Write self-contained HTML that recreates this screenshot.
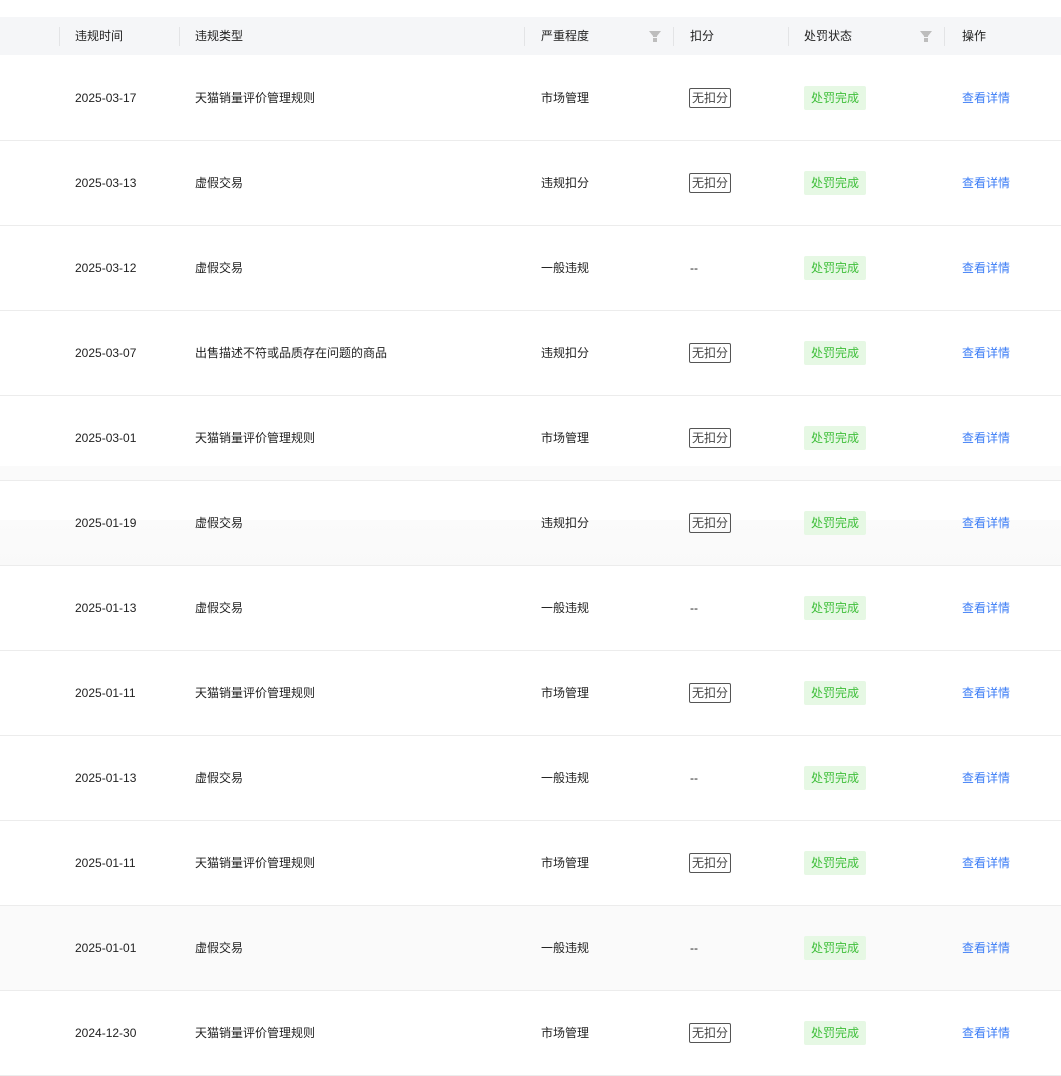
<!DOCTYPE html>
<html><head><meta charset="utf-8"><style>
*{margin:0;padding:0;box-sizing:border-box}
body{width:1061px;height:1068px;background:#fff;position:relative;overflow:hidden;font-family:"Liberation Sans","Noto Sans CJK SC",sans-serif;font-size:12px;color:#1f1f1f}
.hd{position:absolute;left:0;top:17px;width:1061px;height:38px;background:#f5f6f8}
.sep{position:absolute;top:10px;width:1px;height:19px;background:#e3e4e6}
.ht{position:absolute;top:11px;line-height:16px;color:#1f1f1f}
.flt{position:absolute;top:14px}
.row{position:absolute;left:0;width:1061px;height:85px;border-bottom:1px solid #ececec}
.c{position:absolute;top:34px;line-height:16px}
.tag1{position:absolute;left:689px;top:32px;height:20px;width:42px;border:1px solid #555;border-radius:2px;line-height:18px;text-align:center;color:#444}
.tag2{position:absolute;left:804px;top:30px;height:24px;width:62px;background:#e6f8e4;border-radius:2px;line-height:24px;text-align:center;color:#3fbf3a}
.lk{color:#3b7cf6}
</style></head><body>
<div class="hd">
<div class="sep" style="left:59px"></div><div class="sep" style="left:179px"></div><div class="sep" style="left:524px"></div><div class="sep" style="left:673px"></div><div class="sep" style="left:788px"></div><div class="sep" style="left:944px"></div>
<div class="ht" style="left:75px">违规时间</div>
<div class="ht" style="left:195px">违规类型</div>
<div class="ht" style="left:541px">严重程度</div>
<div class="ht" style="left:690px">扣分</div>
<div class="ht" style="left:804px">处罚状态</div>
<div class="ht" style="left:962px">操作</div>
<svg class="flt" style="left:649px" width="12" height="11" viewBox="0 0 12 11"><path d="M0 0H12L8 5V6H4V5Z" fill="#bdbdbd"/><rect x="4" y="7" width="4" height="4" fill="#bdbdbd"/></svg>
<svg class="flt" style="left:920px" width="12" height="11" viewBox="0 0 12 11"><path d="M0 0H12L8 5V6H4V5Z" fill="#bdbdbd"/><rect x="4" y="7" width="4" height="4" fill="#bdbdbd"/></svg>
</div>
<div style="position:absolute;left:0;top:466px;width:1061px;height:14px;background:#fafafa"></div>
<div style="position:absolute;left:0;top:520px;width:1061px;height:45px;background:linear-gradient(#fbfbfb,#f9f9f9)"></div>
<div id="rows"></div>
<script>
var d=[["2025-03-17","天猫销量评价管理规则","市场管理",1],["2025-03-13","虚假交易","违规扣分",1],["2025-03-12","虚假交易","一般违规",0],["2025-03-07","出售描述不符或品质存在问题的商品","违规扣分",1],["2025-03-01","天猫销量评价管理规则","市场管理",1],["2025-01-19","虚假交易","违规扣分",1],["2025-01-13","虚假交易","一般违规",0],["2025-01-11","天猫销量评价管理规则","市场管理",1],["2025-01-13","虚假交易","一般违规",0],["2025-01-11","天猫销量评价管理规则","市场管理",1],["2025-01-01","虚假交易","一般违规",0],["2024-12-30","天猫销量评价管理规则","市场管理",1]];
var h="";d.forEach(function(r,i){h+='<div class="row" style="top:'+(56+85*i)+'px;'+(i==10?'background:#fafafa':'')+'"><div class="c" style="left:75px">'+r[0]+'</div><div class="c" style="left:195px">'+r[1]+'</div><div class="c" style="left:541px">'+r[2]+'</div>'+(r[3]?'<div class="tag1">无扣分</div>':'<div class="c" style="left:690px">--</div>')+'<div class="tag2">处罚完成</div><div class="c lk" style="left:962px">查看详情</div></div>'});
document.getElementById("rows").innerHTML=h;
</script>
</body></html>
